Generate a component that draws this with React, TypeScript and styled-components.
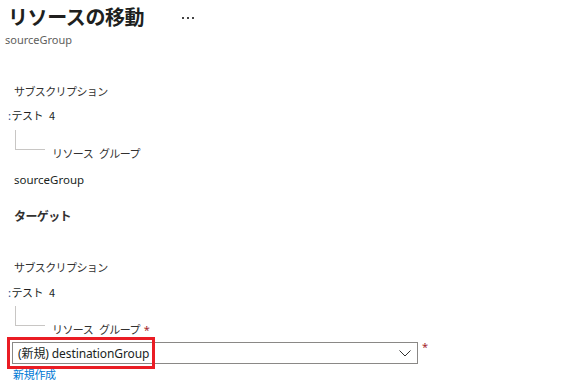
import styled, { createGlobalStyle } from "styled-components";

const GlobalStyle = createGlobalStyle`
  html, body {
    margin: 0;
    padding: 0;
    background: #ffffff;
  }
  body {
    font-family: "Noto Sans", "Noto Sans CJK JP", sans-serif;
    color: #323130;
  }
`;

const Page = styled.div`
  display: flex;
  flex-direction: column;
  padding-left: 8px;
  width: 586px;
  height: 382px;
  box-sizing: border-box;
  overflow: hidden;
`;

const Header = styled.div`
  display: flex;
  align-items: center;
  height: 32px;
  padding-top: 2px;
  box-sizing: border-box;
`;

const Title = styled.h1`
  margin: 0;
  font-family: "Noto Sans CJK JP", sans-serif;
  font-size: 20px;
  font-weight: 700;
  letter-spacing: -0.4px;
  color: #201f1e;
  line-height: 30px;
`;

const More = styled.div`
  display: flex;
  gap: 3px;
  margin-left: 38px;
  margin-top: 2px;
`;

const Dot = styled.span`
  width: 2px;
  height: 2px;
  background: #444;
`;

const SubTitle = styled.div`
  font-size: 11px;
  line-height: 16px;
  color: #605e5c;
  margin-left: -3px;
`;

const Label = styled.div<{ $top: number; $bold?: boolean }>`
  margin-top: ${(p) => p.$top}px;
  margin-left: 6px;
  height: 16px;
  line-height: 16px;
  font-family: "Noto Sans CJK JP", sans-serif;
  font-size: ${(p) => (p.$bold ? 12 : 11)}px;
  font-weight: ${(p) => (p.$bold ? 700 : 400)};
  letter-spacing: -0.6px;
  color: #323130;
`;

const Value = styled.div<{ $top: number }>`
  margin-top: ${(p) => p.$top}px;
  height: 16px;
  line-height: 16px;
  font-family: "Noto Sans CJK JP", sans-serif;
  font-size: 11px;
  letter-spacing: -0.5px;
  word-spacing: 4px;
  color: #201f1e;
`;

const Colon = styled.span`
  color: #2b5797;
  margin-right: 1px;
`;

const Plain = styled.div<{ $top: number }>`
  margin-top: ${(p) => p.$top}px;
  margin-left: 6px;
  height: 16px;
  line-height: 16px;
  font-size: 11.5px;
  color: #201f1e;
`;

const TreeRow = styled.div<{ $top: number }>`
  display: flex;
  margin-top: ${(p) => p.$top}px;
  height: 31px;
`;

const Branch = styled.div`
  margin-left: 7px;
  width: 30px;
  height: 20px;
  border-left: 1px solid #c8c6c4;
  border-bottom: 1px solid #c8c6c4;
  box-sizing: border-box;
`;

const BranchLabel = styled.div`
  align-self: flex-end;
  margin-left: 7px;
  height: 16px;
  line-height: 16px;
  font-family: "Noto Sans CJK JP", sans-serif;
  font-size: 11px;
  letter-spacing: -0.6px;
  word-spacing: 4px;
  color: #323130;
`;

const Required = styled.span`
  color: #a4262c;
  margin-left: 4px;
  font-family: "Noto Sans", sans-serif;
`;

const SelectRow = styled.div`
  display: flex;
  align-items: flex-start;
  margin-top: 5px;
  margin-left: 4px;
`;

const SelectBox = styled.div`
  position: relative;
  display: flex;
  align-items: center;
  justify-content: space-between;
  width: 406px;
  height: 22px;
  box-sizing: border-box;
  border: 1px solid #8a8886;
  padding: 0 6px 0 5px;
  font-family: "Noto Sans", "Noto Sans CJK JP", sans-serif;
  font-size: 12px;
  letter-spacing: -0.1px;
  color: #201f1e;
`;

const Highlight = styled.div`
  position: absolute;
  left: -6px;
  top: -6px;
  width: 148px;
  height: 32px;
  box-sizing: border-box;
  border: 3px solid #ea1c24;
  pointer-events: none;
`;

const Star = styled.span`
  color: #a4262c;
  font-size: 11px;
  line-height: 11px;
  margin-left: 4px;
  margin-top: -1px;
`;

const NewLink = styled.a`
  margin-top: 3px;
  margin-left: 5px;
  line-height: 14px;
  font-family: "Noto Sans CJK JP", sans-serif;
  font-size: 11px;
  color: #0078d4;
  letter-spacing: -0.3px;
  text-decoration: none;
`;

const Chevron = () => (
  <svg width="12" height="7" viewBox="0 0 12 7">
    <polyline points="0.5,0.5 6,6 11.5,0.5" fill="none" stroke="#323130" strokeWidth="1" />
  </svg>
);

export default function App() {
  return (
    <>
      <GlobalStyle />
      <Page>
        <Header>
          <Title>リソースの移動</Title>
          <More>
            <Dot />
            <Dot />
            <Dot />
          </More>
        </Header>
        <SubTitle>sourceGroup</SubTitle>

        <Label $top={35}>サブスクリプション</Label>
        <Value $top={8}>
          <Colon>:</Colon>テスト 4
        </Value>
        <TreeRow $top={7}>
          <Branch />
          <BranchLabel>リソース グループ</BranchLabel>
        </TreeRow>
        <Plain $top={11}>sourceGroup</Plain>

        <Label $top={20} $bold>
          ターゲット
        </Label>

        <Label $top={35}>サブスクリプション</Label>
        <Value $top={9}>
          <Colon>:</Colon>テスト 4
        </Value>
        <TreeRow $top={6}>
          <Branch />
          <BranchLabel>
            リソース グループ<Required>*</Required>
          </BranchLabel>
        </TreeRow>

        <SelectRow>
          <SelectBox>
            <Highlight />
            <span>(新規) destinationGroup</span>
            <Chevron />
          </SelectBox>
          <Star>*</Star>
        </SelectRow>
        <NewLink href="#">新規作成</NewLink>
      </Page>
    </>
  );
}
